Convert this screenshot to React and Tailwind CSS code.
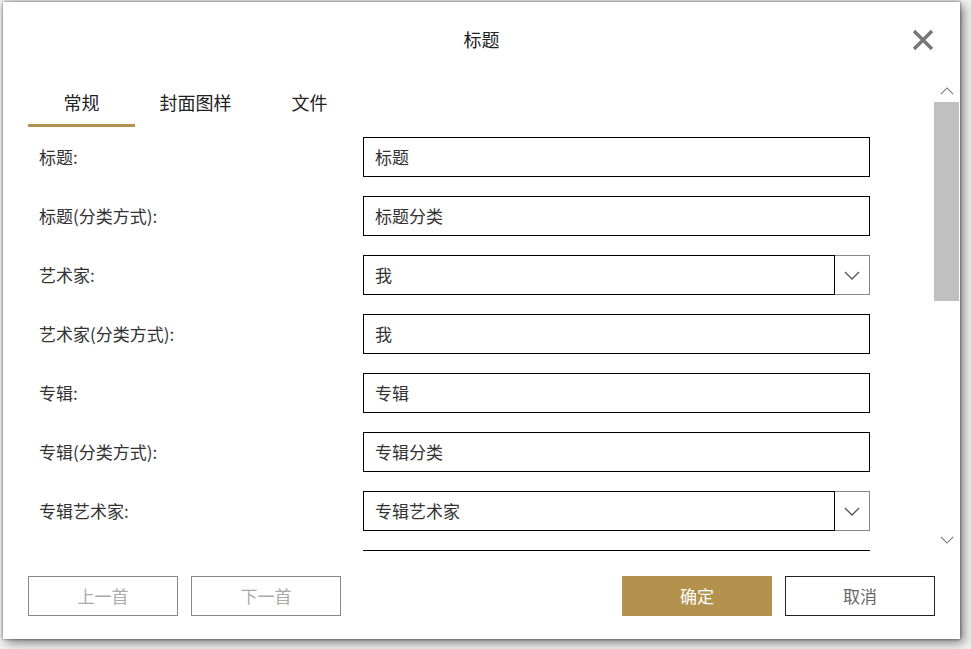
import React from 'react';

const font = { fontFamily: '"Noto Sans CJK SC", "Noto Sans", sans-serif' };

const rows = [
  { label: '标题:', value: '标题' },
  { label: '标题(分类方式):', value: '标题分类' },
  { label: '艺术家:', value: '我', select: true },
  { label: '艺术家(分类方式):', value: '我' },
  { label: '专辑:', value: '专辑' },
  { label: '专辑(分类方式):', value: '专辑分类' },
  { label: '专辑艺术家:', value: '专辑艺术家', select: true },
  { label: '', value: '' },
];

function Chevron({ up, className }) {
  return (
    <svg width="16" height="9" viewBox="0 0 16 9" className={className}>
      <path
        d={up ? 'M1 8 L8 1 L15 8' : 'M1 1 L8 8 L15 1'}
        fill="none"
        stroke="currentColor"
        strokeWidth="1.3"
      />
    </svg>
  );
}

function Field({ row }) {
  return (
    <div className="flex items-center h-[40px] shrink-0">
      <div className="w-[360px] pl-[36px] text-[17px] text-[#333]">{row.label}</div>
      <div className="flex w-[507px] h-[40px]">
        <div className="flex-1 border border-black flex items-center pl-[11px] text-[17px] text-[#333]">
          {row.value}
        </div>
        {row.select && (
          <div className="w-[35px] border border-l-0 border-[#888] flex items-center justify-center text-[#555]">
            <Chevron />
          </div>
        )}
      </div>
    </div>
  );
}

export default function App() {
  return (
    <div className="w-[971px] h-[649px] bg-[#f2f2f2] pt-[2px] pl-[3px]" style={font}>
      <div className="relative w-[957px] h-[637px] bg-white flex flex-col shadow-[0_0_3px_rgba(0,0,0,0.6),4px_4px_10px_rgba(0,0,0,0.45)]">
        {/* header */}
        <div className="h-[78px] shrink-0 flex items-center justify-center pb-[4px] text-[18px] text-[#222]">
          标题
        </div>
        <button className="absolute left-[909px] top-[27px] w-[22px] h-[22px] text-[#777]">
          <svg width="22" height="22" viewBox="0 0 22 22">
            <path d="M2 2 L20 20 M20 2 L2 20" stroke="currentColor" strokeWidth="3.5" />
          </svg>
        </button>

        {/* body */}
        <div className="flex h-[471px] shrink-0">
          <div className="w-[931px] overflow-hidden">
            <div className="flex h-[47px] ml-[25px]">
              <div className="w-[107px] flex items-center justify-center border-b-[3px] border-[#b3924d] text-[18px] text-[#222]">
                常规
              </div>
              <div className="w-[121px] flex items-center justify-center pb-[3px] text-[18px] text-[#222]">
                封面图样
              </div>
              <div className="w-[107px] flex items-center justify-center pb-[3px] text-[18px] text-[#222]">
                文件
              </div>
            </div>
            <div className="flex flex-col gap-[19px] pt-[10px]">
              {rows.map((r, i) => (
                <Field key={i} row={r} />
              ))}
            </div>
          </div>
          <div className="w-[25px] flex flex-col">
            <div className="h-[22px] flex items-center justify-center text-[#777]">
              <Chevron up className="w-[14px] h-[8px]" />
            </div>
            <div className="h-[199px] bg-[#c0c0c0]" />
            <div className="flex-1" />
            <div className="h-[22px] flex items-center justify-center text-[#777]">
              <Chevron className="w-[14px] h-[8px]" />
            </div>
          </div>
        </div>

        {/* footer */}
        <div className="flex items-center justify-between pl-[25px] pt-[25px] pr-[25px]">
          <div className="flex gap-[13px]">
            <button className="w-[150px] h-[40px] border border-[#888] text-[17px] text-[#aaa]">上一首</button>
            <button className="w-[150px] h-[40px] border border-[#888] text-[17px] text-[#aaa]">下一首</button>
          </div>
          <div className="flex gap-[13px]">
            <button className="w-[150px] h-[40px] bg-[#b3924d] text-[17px] text-white">确定</button>
            <button className="w-[150px] h-[40px] border border-[#222] text-[17px] text-[#666]">取消</button>
          </div>
        </div>
      </div>
    </div>
  );
}
